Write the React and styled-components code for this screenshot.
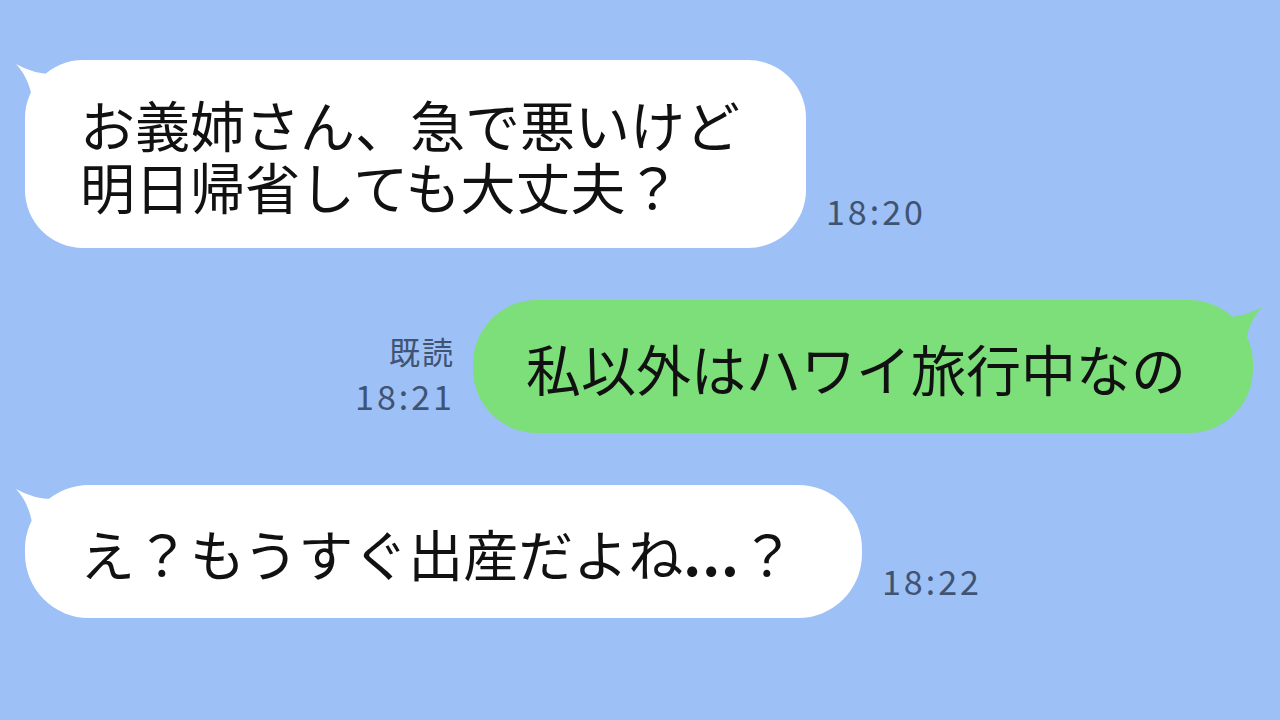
import React from "react";
import styled, { createGlobalStyle } from "styled-components";

const GlobalStyle = createGlobalStyle`
  html, body {
    margin: 0;
    padding: 0;
    background: #9dc0f6;
  }
  body {
    font-family: "Noto Sans CJK JP", "Noto Sans", sans-serif;
  }
`;

const Screen = styled.div`
  width: 1280px;
  height: 720px;
  overflow: hidden;
  background: #9dc0f6;
  display: flex;
  flex-direction: column;
  gap: 52px;
  padding-top: 60px;
  box-sizing: border-box;
`;

const Row = styled.div`
  display: flex;
  align-items: flex-end;
  gap: ${(p) => (p.mine ? 18 : 20)}px;
  flex-direction: ${(p) => (p.mine ? "row-reverse" : "row")};
  padding: ${(p) => (p.mine ? "0 27px 0 0" : "0 0 0 25px")};
`;

const Bubble = styled.div`
  position: relative;
  box-sizing: border-box;
  width: ${(p) => p.w}px;
  height: ${(p) => p.h}px;
  display: flex;
  flex-direction: column;
  justify-content: center;
  padding: 0 0 0 ${(p) => (p.mine ? 53 : 55)}px;
  border-radius: ${(p) => (p.h > 150 ? 58 : 64)}px;
  background: ${(p) => (p.mine ? "#7ddf79" : "#ffffff")};
  color: #111;
  font-size: 55px;
  line-height: 62px;
  white-space: nowrap;
`;

const Dots = styled.span`
  font-weight: 700;
  letter-spacing: 1px;
`;

const Tail = styled.svg`
  position: absolute;
  top: 0;
  width: 50px;
  height: 50px;
  overflow: visible;
  ${(p) => (p.mine ? "right: 0;" : "left: 0;")}
`;

const Meta = styled.div`
  display: flex;
  flex-direction: column;
  align-items: ${(p) => (p.mine ? "flex-end" : "flex-start")};
  margin-bottom: 15px;
  color: #3f5372;
  font-size: 34px;
  line-height: 45px;
  letter-spacing: 3px;
`;

const Read = styled.span`
  font-size: 31px;
  letter-spacing: 2px;
`;

function BubbleTail({ mine, color }) {
  const d = "M -9 4 Q 10 15 32 14 L 32 46 L 8 46 Q 6 20 -9 4 Z";
  return (
    <Tail mine={mine} viewBox={mine ? "-50 0 50 50" : "0 0 50 50"}>
      <path d={d} fill={color} transform={mine ? "scale(-1,1) translate(0,3)" : ""} />
    </Tail>
  );
}

const messages = [
  { mine: false, w: 781, h: 188, lines: ["お義姉さん、急で悪いけど", "明日帰省しても大丈夫？"], time: "18:20" },
  { mine: true, w: 780, h: 133, lines: ["私以外はハワイ旅行中なの"], time: "18:21", read: true },
  {
    mine: false,
    w: 837,
    h: 133,
    lines: [
      <>
        え？もうすぐ出産だよね<Dots>...</Dots>？
      </>,
    ],
    time: "18:22",
  },
];

export default function App() {
  return (
    <>
      <GlobalStyle />
      <Screen>
        {messages.map((m, i) => (
          <Row key={i} mine={m.mine}>
            <Bubble mine={m.mine} w={m.w} h={m.h}>
              <BubbleTail mine={m.mine} color={m.mine ? "#7ddf79" : "#ffffff"} />
              {m.lines.map((l, j) => (
                <span key={j}>{l}</span>
              ))}
            </Bubble>
            <Meta mine={m.mine}>
              {m.read && <Read>既読</Read>}
              <span>{m.time}</span>
            </Meta>
          </Row>
        ))}
      </Screen>
    </>
  );
}
